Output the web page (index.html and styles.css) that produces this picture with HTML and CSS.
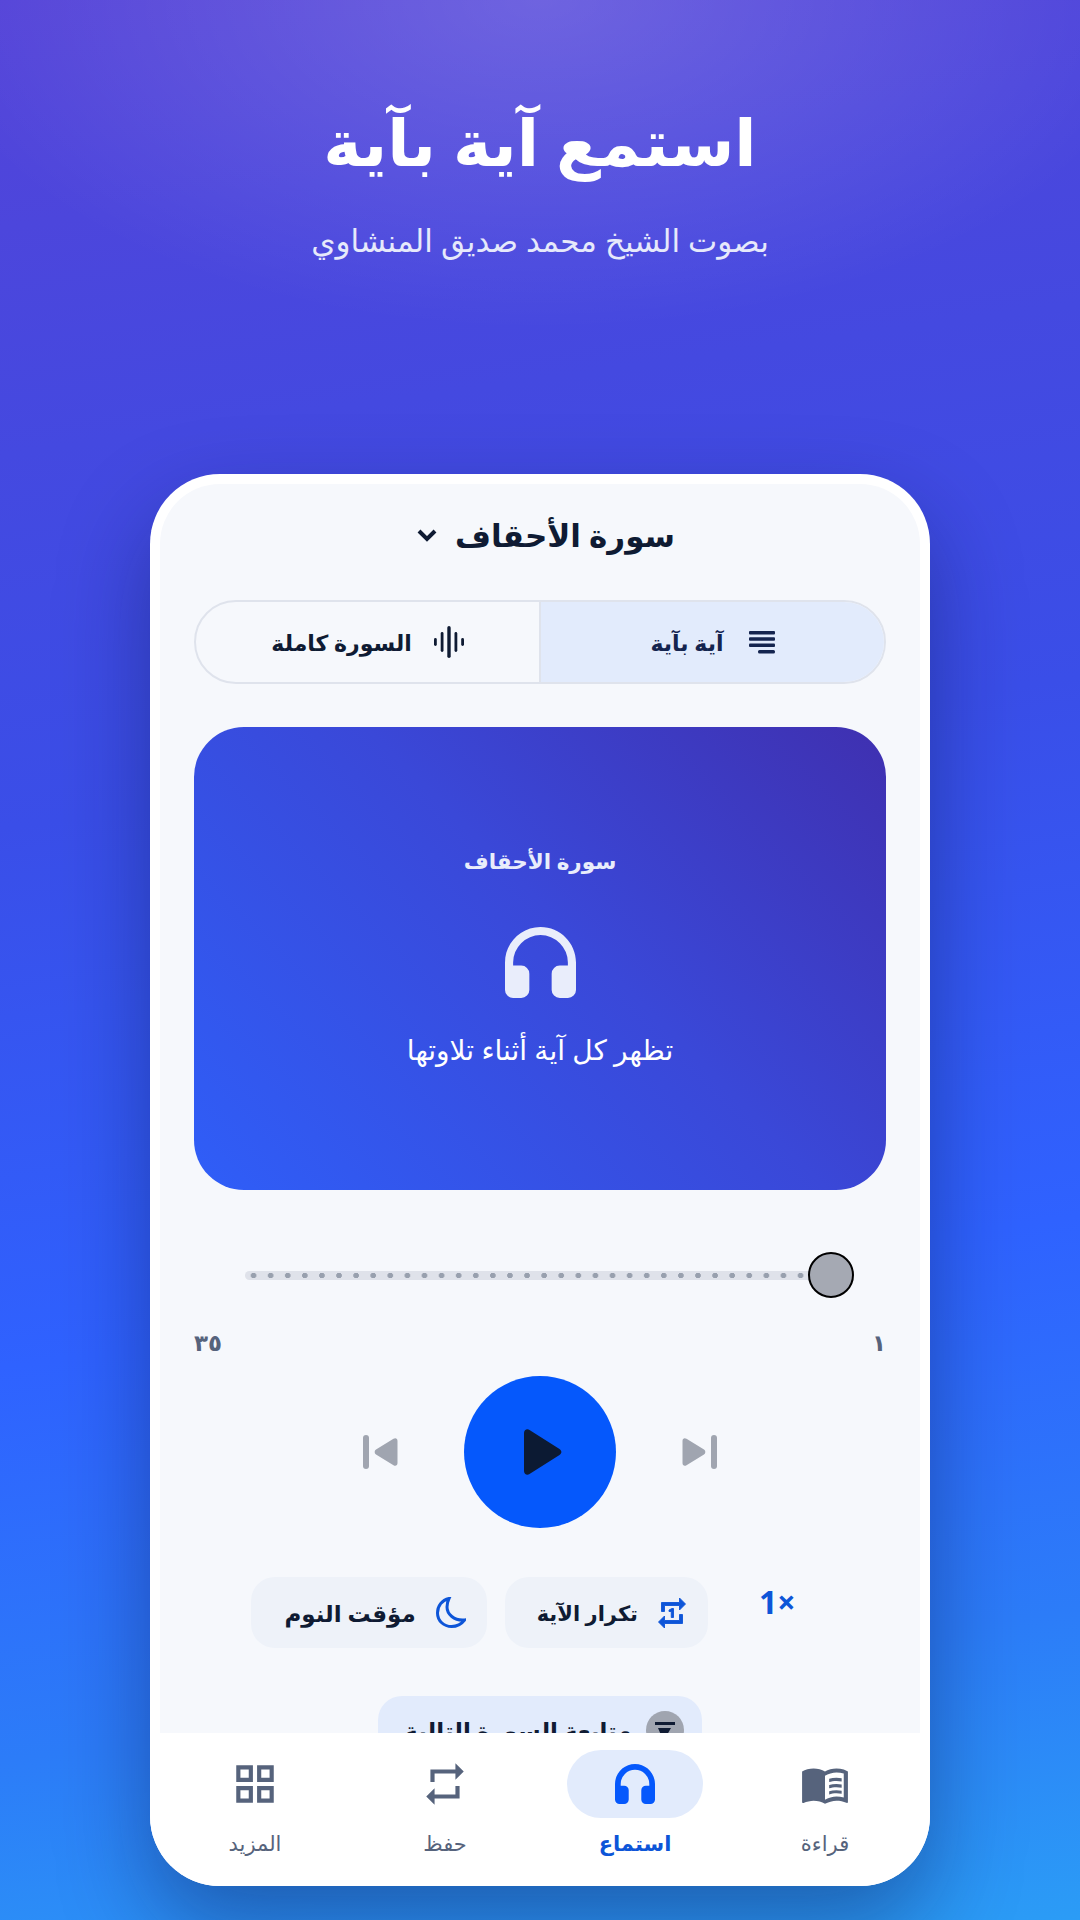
FILE: index.html
```html
<!DOCTYPE html>
<html lang="ar" dir="rtl">

<head>
  <meta charset="utf-8">
  <title>استمع آية بآية</title>
  <link rel="stylesheet" href="styles.css">
</head>

<body>
  <header class="hero">
    <h1>استمع آية بآية</h1>
    <p>بصوت الشيخ محمد صديق المنشاوي</p>
  </header>

  <div class="phone">
    <main class="screen">
      <div class="surah-select">
        <span>سورة الأحقاف</span>
        <svg class="chevron" viewBox="0 0 24 24"><path d="M4 8l8 8 8-8" /></svg>
      </div>

      <div class="tabs">
        <div class="tab active">
          <svg class="lines-icon" viewBox="0 0 26 23">
            <rect width="26" height="3.500" rx="1" />
            <rect y="6.300" width="26" height="3.500" rx="1" />
            <rect y="12.600" width="26" height="3.500" rx="1" />
            <rect x="9" y="19" width="17" height="3.500" rx="1.500" />
          </svg>
          <span>آية بآية</span>
        </div>
        <div class="tab">
          <svg class="wave-icon" viewBox="0 0 30 32">
            <rect x="0" y="12" width="2.800" height="8" rx="1.400" />
            <rect x="6.700" y="6" width="2.800" height="20" rx="1.400" />
            <rect x="13.300" y="0" width="3.400" height="32" rx="1.700" />
            <rect x="20.500" y="6" width="2.800" height="20" rx="1.400" />
            <rect x="27.200" y="12" width="2.800" height="8" rx="1.400" />
          </svg>
          <span>السورة كاملة</span>
        </div>
      </div>

      <section class="verse-card">
        <h2>سورة الأحقاف</h2>
        <svg viewBox="0 0 70 70"><path d="M35 0C15.700 0 0 15.700 0 35v27a8 8 0 0 0 8 8h8a8 8 0 0 0 8-8V46a8 8 0 0 0-8-8H8v-3a27 27 0 0 1 54 0v3h-8a8 8 0 0 0-8 8v16a8 8 0 0 0 8 8h8a8 8 0 0 0 8-8V35C70 15.700 54.300 0 35 0z" /></svg>
        <p>تظهر كل آية أثناء تلاوتها</p>
      </section>

      <div class="slider">
        <div class="track"></div>
        <div class="thumb"></div>
      </div>
      <div class="range-labels">
        <span>١</span>
        <span>٣٥</span>
      </div>

      <div class="controls">
        <svg class="skip" viewBox="0 0 35 34"><g transform="matrix(-1 0 0 1 35 0)"><rect width="6" height="34" rx="3" /><path d="M34.500 6v22c0 2.500-2 3.500-4 2.200L13 19.500c-1.800-1.200-1.800-3.800 0-5L30.500 3.800c2-1.300 4-.3 4 2.200z" /></g></svg>
        <button class="play">
          <svg viewBox="0 0 38 46"><path d="M0 4c0-3 3-4.800 5.500-3l30 19c2.500 1.600 2.500 4.400 0 6l-30 19C3 46.800 0 45 0 42z" /></svg>
        </button>
        <svg class="skip" viewBox="0 0 35 34"><rect width="6" height="34" rx="3" /><path d="M34.500 6v22c0 2.500-2 3.500-4 2.200L13 19.500c-1.800-1.200-1.800-3.800 0-5L30.500 3.800c2-1.300 4-.3 4 2.200z" /></svg>
      </div>

      <div class="options">
        <div class="speed">1×</div>
        <div class="option option-repeat">
          <svg class="repeat-icon" viewBox="0 0 24 24"><path d="M7 7h10v3l4-4-4-4v3H5v6h2V7zm10 10H7v-3l-4 4 4 4v-3h12v-6h-2v4zm-4-2V9h-1l-2 1v1h1.500v4H13z" /></svg>
          <span>تكرار الآية</span>
        </div>
        <div class="option option-timer">
          <svg class="moon-icon" viewBox="0 0 30 31"><path d="M13 1.500C6 3 1.500 9 1.500 16c0 8 6.500 13.500 14 13.500 5.500 0 10-2.500 13-6.500C18 24 11 17 11 10c0-3 .8-6 2-8.500z" /></svg>
          <span>مؤقت النوم</span>
        </div>
      </div>

      <div class="next-row">
        <div class="next-surah">
          <span class="next-icon">
            <svg viewBox="0 0 24 24"><path d="M2 4h20v3H2zM5 10h13l-4 7H8z" /></svg>
          </span>
          <span>متابعة السورة التالية</span>
        </div>
      </div>
    </main>

    <nav class="bottom-nav">
      <div class="nav-item">
        <span class="nav-icon">
          <svg viewBox="0 0 24 24"><path d="M21 5c-1.110-.35-2.330-.5-3.500-.5-1.950 0-4.050.4-5.500 1.500-1.450-1.100-3.550-1.500-5.500-1.500S2.450 4.900 1 6v14.650c0 .25.25.5.5.5.1 0 .15-.05.25-.05C3.100 20.450 5.050 20 6.500 20c1.950 0 4.050.4 5.500 1.500 1.350-.85 3.800-1.500 5.500-1.500 1.650 0 3.350.3 4.750 1.050.1.05.15.05.25.05.25 0 .5-.25.5-.5V6c-.6-.45-1.250-.75-2-1zm0 13.500c-1.100-.35-2.300-.5-3.500-.5-1.700 0-4.150.65-5.500 1.500V8c1.350-.85 3.800-1.500 5.500-1.500 1.200 0 2.400.15 3.500.5v11.500z" /><path d="M17.500 10.500c.88 0 1.730.09 2.500.26V9.240c-.79-.15-1.640-.24-2.500-.24-1.280 0-2.460.16-3.500.47v1.570c.99-.35 2.180-.54 3.500-.54zM14 12.490v1.570c.99-.35 2.180-.54 3.500-.54.88 0 1.730.09 2.500.26V12.200c-.79-.15-1.640-.24-2.500-.24-1.280 0-2.460.17-3.500.53zM17.500 14.970c-1.280 0-2.460.16-3.500.47v1.570c.99-.35 2.180-.54 3.500-.54.88 0 1.730.09 2.500.26v-1.520c-.79-.16-1.640-.24-2.500-.24z" /></svg>
        </span>
        <span>قراءة</span>
      </div>
      <div class="nav-item active">
        <span class="nav-icon">
          <svg class="nav-headphones" viewBox="0 0 70 70"><path d="M35 0C15.700 0 0 15.700 0 35v27a8 8 0 0 0 8 8h8a8 8 0 0 0 8-8V46a8 8 0 0 0-8-8H10v-3a25 25 0 0 1 50 0v3h-6a8 8 0 0 0-8 8v16a8 8 0 0 0 8 8h8a8 8 0 0 0 8-8V35C70 15.700 54.300 0 35 0z" /></svg>
        </span>
        <span>استماع</span>
      </div>
      <div class="nav-item">
        <span class="nav-icon">
          <svg viewBox="0 0 24 24"><path d="M7 7h10v3l4-4-4-4v3H5v6h2V7zm10 10H7v-3l-4 4 4 4v-3h12v-6h-2v4z" /></svg>
        </span>
        <span>حفظ</span>
      </div>
      <div class="nav-item">
        <span class="nav-icon">
          <svg viewBox="0 0 24 24"><path d="M3 3v8h8V3H3zm6 6H5V5h4v4zm-6 4v8h8v-8H3zm6 6H5v-4h4v4zm4-16v8h8V3h-8zm6 6h-4V5h4v4zm-6 4v8h8v-8h-8zm6 6h-4v-4h4v4z" /></svg>
        </span>
        <span>المزيد</span>
      </div>
    </nav>
  </div>
</body>

</html>
```

FILE: styles.css
```css
* {
    box-sizing: border-box;
}

html,
body {
    margin: 0;
    height: 1920px;
}

body {
    width: 1080px;
    overflow: hidden;
    font-family: "Noto Sans", "DejaVu Sans", sans-serif;
    color: #0f1b33;
    background:
        radial-gradient(ellipse 620px 330px at 50% 0, rgba(255, 255, 255, 0.17), rgba(255, 255, 255, 0)),
        linear-gradient(172deg, #5443d8 0%, #4449e0 22%, #3a4ee8 40%, #2f62ff 66%, #2c7cf8 85%, #2b9cf6 100%);
}

.hero {
    height: 474px;
    padding-top: 86px;
    text-align: center;
    color: #fff;
}

.hero h1 {
    margin: 0;
    height: 110px;
    font-size: 65px;
    line-height: 110px;
    font-weight: 700;
}

.hero p {
    margin: 16px 0 0;
    font-size: 31px;
    line-height: 56px;
    color: #e6e9fb;
}

.phone {
    width: 780px;
    height: 1412px;
    margin: 0 auto;
    display: flex;
    flex-direction: column;
    border-radius: 70px;
    background: #fff;
    box-shadow: 0 40px 90px rgba(10, 20, 70, 0.4);
    overflow: hidden;
}

.screen {
    height: 1249px;
    margin: 10px 10px 0;
    padding: 16px 34px 0;
    flex: none;
    overflow: hidden;
    border-radius: 60px 60px 0 0;
    background: #f6f8fc;
}

.surah-select {
    height: 70px;
    padding-left: 10px;
    display: flex;
    align-items: center;
    justify-content: center;
    gap: 16px;
    font-size: 31px;
    font-weight: 700;
}

.chevron {
    width: 24px;
    height: 24px;
    fill: none;
    stroke: #0f1b33;
    stroke-width: 4;
}

.tabs {
    height: 84px;
    margin-top: 30px;
    display: flex;
    border: 2px solid #dfe3ec;
    border-radius: 42px;
    overflow: hidden;
}

.tab {
    flex: 1;
    display: flex;
    align-items: center;
    justify-content: center;
    gap: 22px;
    font-size: 22px;
    font-weight: 700;
}

.tab svg {
    fill: #0f1b33;
}

.lines-icon {
    width: 26px;
    height: 23px;
}

.wave-icon {
    width: 30px;
    height: 32px;
}

.tab.active {
    gap: 25px;
    background: #e2ebfc;
    border-left: 2px solid #dfe3ec;
    color: #14244f;
}

.tab.active svg {
    fill: #14244f;
}

.verse-card {
    height: 463px;
    margin-top: 43px;
    padding-top: 111px;
    display: flex;
    flex-direction: column;
    align-items: center;
    border-radius: 50px;
    background: linear-gradient(45deg, #2f5ef8 0%, #3a48d8 55%, #3f30b0 100%);
    color: #e9edfb;
}

.verse-card h2 {
    margin: 0;
    height: 46px;
    font-size: 21.500px;
    line-height: 46px;
    font-weight: 700;
}

.verse-card svg {
    width: 71px;
    height: 71px;
    margin-top: 43px;
    fill: #e9edfb;
}

.verse-card p {
    margin: 25px 0 0;
    font-size: 28px;
    line-height: 52px;
    color: #fff;
}

.slider {
    position: relative;
    height: 46px;
    margin-top: 62px;
}

.track {
    position: absolute;
    top: 19px;
    left: 51px;
    right: 60px;
    height: 9px;
    border-radius: 5px;
    background: radial-gradient(circle, #98a0ae 2.500px, rgba(152, 160, 174, 0) 3px) 0 0 / 17.100px 9px repeat-x, #dfe2ea;
}

.thumb {
    position: absolute;
    top: 0;
    left: 614px;
    width: 46px;
    height: 46px;
    border: 2.500px solid #000;
    border-radius: 50%;
    background: #a5a9b3;
}

.range-labels {
    height: 26px;
    margin-top: 31px;
    display: flex;
    justify-content: space-between;
    font-size: 23px;
    line-height: 26px;
    font-weight: 700;
    color: #56637c;
}

.controls {
    height: 152px;
    margin-top: 21px;
    display: flex;
    align-items: center;
    justify-content: center;
    gap: 66px;
}

.skip {
    width: 35px;
    height: 34px;
    fill: #a0a5b0;
}

.play {
    width: 152px;
    height: 152px;
    padding: 0 0 0 6px;
    display: flex;
    align-items: center;
    justify-content: center;
    border: 0;
    border-radius: 50%;
    background: #0558fc;
}

.play svg {
    width: 38px;
    height: 46px;
    fill: #0c1a33;
}

.options {
    height: 71px;
    margin-top: 49px;
    display: flex;
    justify-content: center;
    gap: 18px;
}

.speed {
    padding: 5px 33px 0;
    direction: ltr;
    font-size: 32px;
    line-height: 40px;
    font-weight: 700;
    color: #0d55d8;
}

.option {
    display: flex;
    align-items: center;
    border-radius: 24px;
    background: #eef2f9;
    font-weight: 700;
}

.option-repeat {
    padding: 0 18px 0 32px;
    gap: 16px;
    font-size: 21px;
}

.option-timer {
    padding: 0 21px 0 33px;
    gap: 20px;
    font-size: 23px;
}

.repeat-icon {
    width: 36px;
    height: 36px;
    fill: #0d55d8;
    stroke: #0d55d8;
    stroke-width: 0.6;
}

.moon-icon {
    width: 30px;
    height: 31px;
    fill: none;
    stroke: #0d55d8;
    stroke-width: 3;
}

.next-row {
    margin-top: 48px;
    display: flex;
    justify-content: center;
}

.next-surah {
    width: 324px;
    height: 68px;
    padding-left: 8px;
    display: flex;
    align-items: center;
    justify-content: center;
    gap: 14px;
    border-radius: 24px;
    background: #e2ebfc;
    font-size: 23px;
    font-weight: 700;
}

.next-icon {
    width: 38px;
    height: 38px;
    padding: 7px;
    border-radius: 50%;
    background: #a0a5b0;
}

.next-icon svg {
    display: block;
    fill: #0f1b33;
}

.bottom-nav {
    flex: 1;
    padding-top: 17px;
    display: grid;
    grid-template-columns: repeat(4, 190px);
    justify-content: center;
    background: #fff;
}

.nav-item {
    display: flex;
    flex-direction: column;
    align-items: center;
    gap: 5px;
    font-size: 21px;
    line-height: 40px;
    color: #56637c;
}

.nav-icon {
    width: 136px;
    height: 68px;
    display: flex;
    align-items: center;
    justify-content: center;
    border-radius: 34px;
}

.nav-icon svg {
    width: 50px;
    height: 50px;
    fill: #56637c;
}

.nav-item.active {
    color: #0d55d8;
    font-weight: 700;
}

.nav-item.active .nav-icon {
    background: #e2ebfc;
}

.nav-item.active svg {
    fill: #0558fc;
}

.nav-item.active .nav-headphones {
    width: 40px;
    height: 40px;
}
```
